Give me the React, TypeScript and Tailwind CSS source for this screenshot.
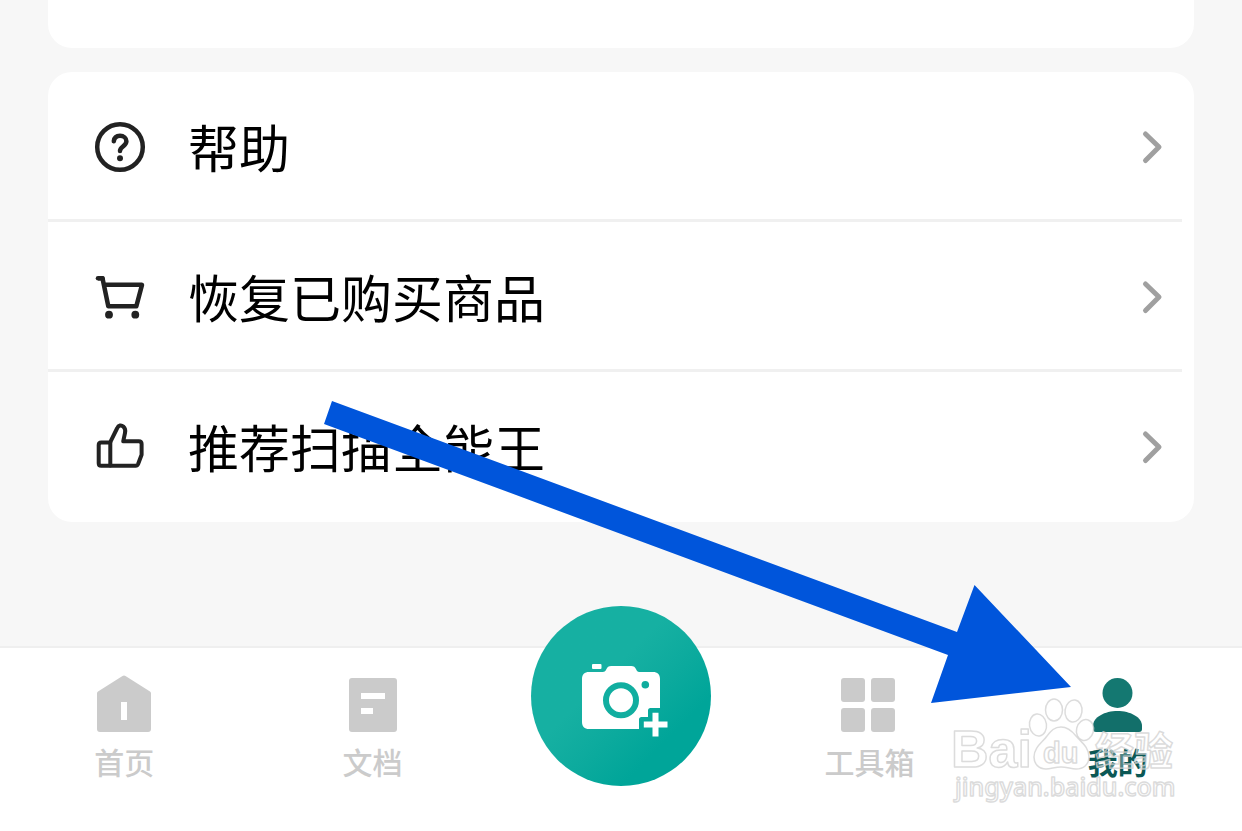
import type { ReactNode } from 'react'
import clsx from 'clsx'

interface MenuItem {
  label: string
  icon: ReactNode
}

interface TabProps {
  label: string
  active?: boolean
  children: ReactNode
}

const lineIcon = {
  viewBox: '0 0 56 56',
  fill: 'none',
  stroke: '#222',
  strokeWidth: 4.5,
  strokeLinecap: 'round',
  strokeLinejoin: 'round',
  className: 'w-14 h-14 shrink-0',
  'aria-hidden': true,
} as const

function HelpIcon() {
  return (
    <svg {...lineIcon}>
      <circle cx="28" cy="28" r="22.8" />
      <path d="M21.8 22.3c.4-3.600 2.900-5.500 6.200-5.500 3.700 0 6.400 2.300 6.400 5.500 0 2.500-1.600 3.800-3.300 5.100-1.700 1.300-3.100 2.300-3.100 4.600" />
      <circle cx="28" cy="39.200" r="3" fill="#222" stroke="none" />
    </svg>
  )
}

function CartIcon() {
  return (
    <svg {...lineIcon}>
      <path d="M6 9.300h4.500L16.300 37.300h28L50 15.800H12.300" strokeLinecap="butt" />
      <path d="M6 9.300h4.500" />
      <circle cx="17" cy="45.700" r="3.900" fill="#222" stroke="none" />
      <circle cx="43.300" cy="45.700" r="3.900" fill="#222" stroke="none" />
    </svg>
  )
}

function ThumbIcon() {
  return (
    <svg {...lineIcon} strokeWidth={4}>
      <path d="M18 23.600 25 9.500c1.600-3.600 4.300-3.700 6.300-2 2 1.800 2.300 4 1.700 6.500l-1.800 8.300h15.600c1.800 0 2.800 1 2.800 2.800v10.600l-3.500 9.300c-.5 1.200-1.300 1.700-2.500 1.700H9.200c-1.600 0-2.500-.9-2.500-2.500V26.100c0-1.700.9-2.500 2.500-2.500z" />
      <path d="M18.300 23.600v23" />
    </svg>
  )
}

function Chevron() {
  return (
    <svg viewBox="0 0 32 40" className="w-8 h-10 shrink-0" aria-hidden="true">
      <path
        d="M9.500 7 23 20 9.500 33.500"
        fill="none"
        stroke="#a0a0a0"
        strokeWidth="5"
        strokeLinecap="round"
        strokeLinejoin="round"
      />
    </svg>
  )
}

function Tab({ label, active, children }: TabProps) {
  return (
    <button
      className={clsx(
        'flex flex-col items-center gap-2 text-[30px] leading-[38px]',
        active ? 'font-bold text-[#0b5855]' : 'font-medium text-[#cbcbcb]'
      )}
    >
      <svg viewBox="0 0 60 60" className="w-15 h-15" fill="currentColor" aria-hidden="true">
        {children}
      </svg>
      {label}
    </button>
  )
}

function CameraIcon() {
  return (
    <svg viewBox="0 0 180 180" className="w-full h-full" fill="#fff" aria-hidden="true">
      <rect x="61" y="58" width="9.500" height="5" rx="1" />
      <path d="M58 66h13.500c2.500 0 3-1 3.700-2.500 1-2.500 2.500-3.500 5-3.500h20c2.500 0 4 1 5 3.500.7 1.500 1.300 2.500 3 2.500H122c4.500 0 7 2.500 7 7v29h-9.500q-2.500 0-2.500 2.500v6.500h-6.500q-2.500 0-2.500 2.500V123H58c-4.500 0-7-2.500-7-7V73c0-4.500 2.500-7 7-7z" />
      <circle cx="90" cy="94.300" r="15" stroke="#11aea0" strokeWidth="6" />
      <circle cx="114.300" cy="78.700" r="3.800" fill="#0fac9e" />
      <path d="M121.500 106.800h6v8.700h9v6h-9v9h-6v-9h-8.700v-6h8.700z" />
    </svg>
  )
}

function Watermark() {
  return (
    <svg
      viewBox="0 0 230 110"
      className="pointer-events-none absolute right-[62px] bottom-[26px] w-[230px] h-[110px]"
      fill="#fff"
      fillOpacity="0.3"
      stroke="#d0d0d0"
      strokeOpacity="0.75"
      strokeWidth="1.5"
      strokeLinejoin="round"
      aria-hidden="true"
    >
      <ellipse cx="88" cy="30" rx="8.500" ry="11" transform="rotate(-8 88 30)" />
      <ellipse cx="104" cy="15" rx="8.500" ry="11" />
      <ellipse cx="123.500" cy="16" rx="8.500" ry="11" transform="rotate(8 123.500 16)" />
      <ellipse cx="135" cy="35" rx="8.500" ry="10.500" transform="rotate(14 135 35)" />
      <path d="M111 32c7 0 11 4 15 9 5 6 13 11 13 21 0 8-6 12-13 12-5 0-9-2-15-2s-10 2-15 2c-7 0-12-5-12-12 0-10 9-15 13-21 4-5 7-9 14-9z" />
      <text x="1" y="72" fontSize="52" fontWeight="700" fontFamily="Liberation Sans, sans-serif">
        Bai
      </text>
      <text x="93" y="68" fontSize="29" fontWeight="700" fontFamily="Liberation Sans, sans-serif">
        du
      </text>
      <text x="145" y="70" fontSize="39" fontWeight="700" fontFamily="Noto Sans CJK SC, sans-serif">
        经验
      </text>
      <text x="5" y="101" fontSize="25" fontWeight="500" fontFamily="Noto Sans, sans-serif">
        jingyan.baidu.com
      </text>
    </svg>
  )
}

const menu: MenuItem[] = [
  { label: '帮助', icon: <HelpIcon /> },
  { label: '恢复已购买商品', icon: <CartIcon /> },
  { label: '推荐扫描全能王', icon: <ThumbIcon /> },
]

export default function App() {
  return (
    <div className="relative flex min-h-screen flex-col overflow-hidden bg-[#f7f7f7] font-['Noto_Sans_CJK_SC',sans-serif]">
      <main className="flex flex-col gap-6 px-12">
        <div className="h-12 rounded-b-3xl bg-white" />
        <ul className="rounded-3xl bg-white">
          {menu.map((item, i) => (
            <li
              key={item.label}
              className={clsx('mr-3', i < menu.length - 1 && 'shadow-[inset_0_-3px_0_#f0f0f0]')}
            >
              <button className="flex h-[150px] w-full items-center pl-11 pr-[14px] text-left">
                {item.icon}
                <span className="ml-10 flex-1 pb-[2px] text-[51px] leading-[60px] text-black">
                  {item.label}
                </span>
                <Chevron />
              </button>
            </li>
          ))}
        </ul>
      </main>

      <nav className="relative mt-auto grid grid-cols-5 border-t-2 border-[#efefef] bg-white pt-[26px] pb-[51px]">
        <Tab label="首页">
          <path d="M28.500 2q1.500-1 3 0L56 17.500q1 .7 1 2V55q0 3-3 3H6q-3 0-3-3V19.500q0-1.300 1-2zM27 28v18h6V28z" fillRule="evenodd" />
        </Tab>
        <Tab label="文档">
          <path d="M9 4h42q3 0 3 3v48q0 3-3 3H9q-3 0-3-3V7q0-3 3-3zM18 19v6h24v-6zM18 34v6h12v-6z" fillRule="evenodd" />
        </Tab>
        <div className="flex justify-center">
          <button
            aria-label="拍照"
            className="absolute -top-[42px] h-[180px] w-[180px] rounded-full bg-linear-to-br from-[#16b0a2] from-40% to-[#00a599] to-75%"
          >
            <CameraIcon />
          </button>
        </div>
        <Tab label="工具箱">
          <rect x="2" y="4" width="24" height="24" rx="3" />
          <rect x="32" y="4" width="24" height="24" rx="3" />
          <rect x="2" y="34" width="24" height="24" rx="3" />
          <rect x="32" y="34" width="24" height="24" rx="3" />
        </Tab>
        <Tab label="我的" active>
          <circle cx="29.500" cy="19" r="15" fill="#147871" />
          <path d="M5 55V52C5 43 17 37 29.500 37S54 43 54 52v3q0 3-3 3H8q-3 0-3-3z" fill="#126f6a" />
        </Tab>
        <Watermark />
      </nav>

      <svg
        viewBox="0 0 747 302"
        className="pointer-events-none absolute left-[324px] top-[401px] w-[747px] h-[302px]"
        aria-hidden="true"
      >
        <path d="M8 0 633 231 650.500 184 747 286 607 302 624 254 0 23z" fill="#0055db" />
      </svg>
    </div>
  )
}
